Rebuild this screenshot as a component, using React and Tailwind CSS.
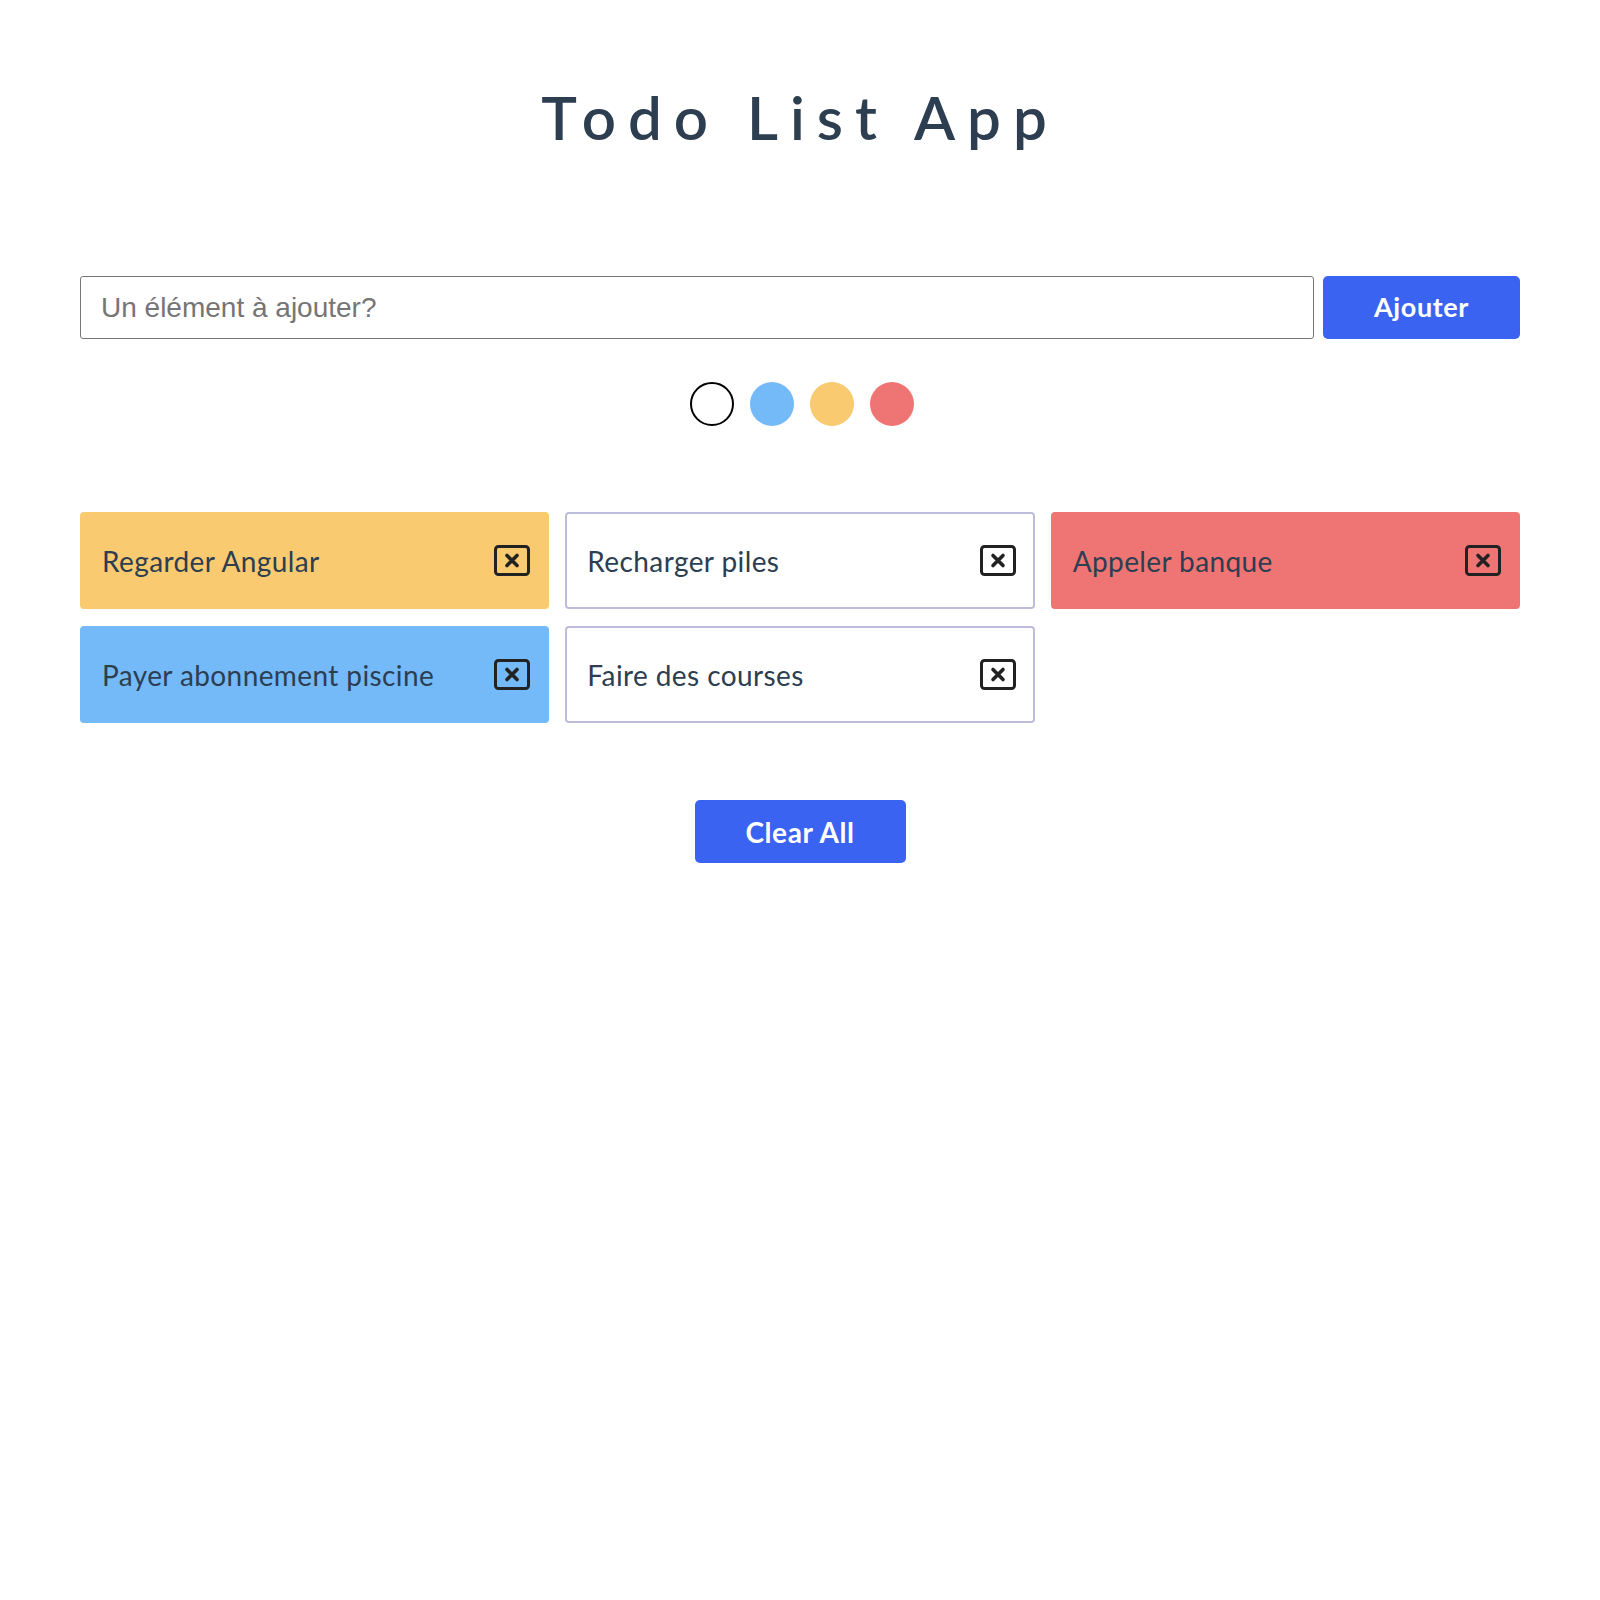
import React from "react";

function CloseIcon() {
  return (
    <svg width="36" height="31" viewBox="0 0 36 31" fill="none">
      <rect x="1.5" y="1.5" width="33" height="28" rx="3" stroke="#222" strokeWidth="3" />
      <path d="M13 10.5 L23 20.5 M23 10.5 L13 20.5" stroke="#222" strokeWidth="3.6" strokeLinecap="round" />
    </svg>
  );
}

const items = [
  { text: "Regarder Angular", cls: "bg-[#f9ca6f] border-[#f9ca6f]" },
  { text: "Recharger piles", cls: "bg-white border-[#bdbddb]" },
  { text: "Appeler banque", cls: "bg-[#ef7574] border-[#ef7574]" },
  { text: "Payer abonnement piscine", cls: "bg-[#74b9f8] border-[#74b9f8]" },
  { text: "Faire des courses", cls: "bg-white border-[#bdbddb]" },
];

export default function App() {
  return (
    <div className="min-h-[1600px] bg-white font-['Lato',sans-serif] text-[#2c3e50]">
      <div className="mx-auto w-[1440px] pt-[81px]">
        <h1 className="text-center text-[60px] leading-[72px] font-semibold tracking-[12px] text-[#2c3e50]">
          Todo List App
        </h1>
        <div className="mt-[123px] flex gap-[9px]">
          <input
            type="text"
            placeholder="Un élément à ajouter?"
            className="h-[63px] flex-1 rounded-[3px] border border-[#767676] px-[20px] font-['Liberation_Sans',Arial,sans-serif] text-[28px] text-[#333] placeholder:text-[#757575] outline-none"
          />
          <button className="h-[63px] w-[197px] rounded-[5px] bg-[#3a63f2] text-[27px] font-bold tracking-[0.6px] text-white">
            Ajouter
          </button>
        </div>
        <div className="mt-[43px] flex justify-center gap-[16px] pl-[4px]">
          <div className="h-[44px] w-[44px] rounded-full border-2 border-black bg-white" />
          <div className="h-[44px] w-[44px] rounded-full bg-[#74b9f8]" />
          <div className="h-[44px] w-[44px] rounded-full bg-[#f9ca6f]" />
          <div className="h-[44px] w-[44px] rounded-full bg-[#ef7574]" />
        </div>
        <div className="mt-[86px] grid grid-cols-3 gap-x-[16px] gap-y-[17px]">
          {items.map((it) => (
            <div
              key={it.text}
              className={`flex h-[97px] items-center justify-between rounded-[4px] border-2 pl-[20px] pr-[17px] ${it.cls}`}
            >
              <span className="text-[28px] tracking-[0.4px] text-[#2c3e50]">{it.text}</span>
              <CloseIcon />
            </div>
          ))}
        </div>
        <div className="mt-[77px] flex justify-center">
          <button className="h-[63px] w-[211px] rounded-[5px] bg-[#3a63f2] text-[28px] font-bold tracking-[0.6px] text-white">
            Clear All
          </button>
        </div>
      </div>
    </div>
  );
}
